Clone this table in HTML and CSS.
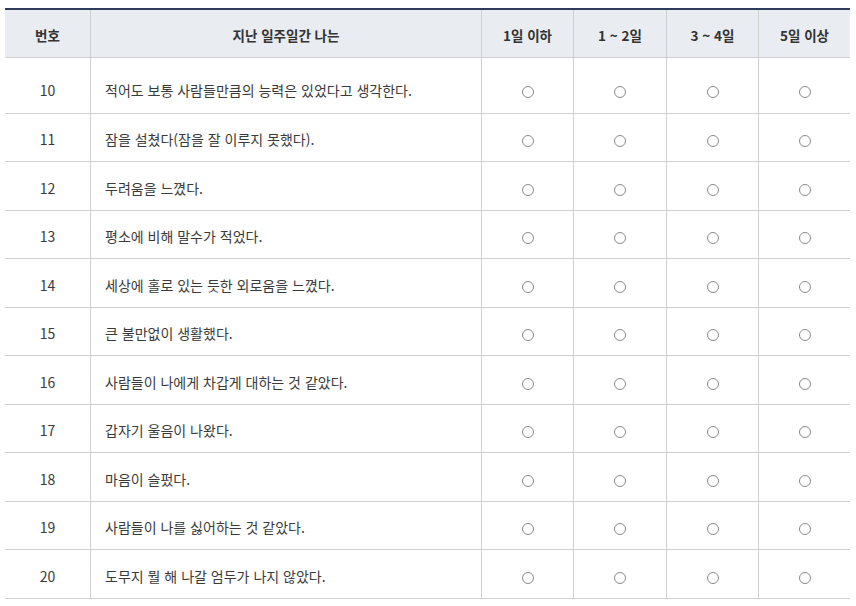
FILE: index.html
```html
<!DOCTYPE html>
<html lang="ko">
<head>
<meta charset="utf-8">
<link rel="stylesheet" href="styles.css">
</head>
<body>
<table class="survey">
  <colgroup>
    <col class="c-no"><col class="c-q"><col class="c-opt"><col class="c-opt2"><col class="c-opt"><col class="c-opt">
  </colgroup>
  <thead>
    <tr>
      <th class="first">번호</th>
      <th>지난 일주일간 나는</th>
      <th>1일 이하</th>
      <th>1 ~ 2일</th>
      <th>3 ~ 4일</th>
      <th>5일 이상</th>
    </tr>
  </thead>
  <tbody>
    <tr class="r-first"><td class="first">10</td><td class="q">적어도 보통 사람들만큼의 능력은 있었다고 생각한다.</td><td><span class="radio"></span></td><td><span class="radio"></span></td><td><span class="radio"></span></td><td><span class="radio"></span></td></tr>
    <tr class="r-a"><td class="first">11</td><td class="q">잠을 설쳤다(잠을 잘 이루지 못했다).</td><td><span class="radio"></span></td><td><span class="radio"></span></td><td><span class="radio"></span></td><td><span class="radio"></span></td></tr>
    <tr class="r-b"><td class="first">12</td><td class="q">두려움을 느꼈다.</td><td><span class="radio"></span></td><td><span class="radio"></span></td><td><span class="radio"></span></td><td><span class="radio"></span></td></tr>
    <tr class="r-a"><td class="first">13</td><td class="q">평소에 비해 말수가 적었다.</td><td><span class="radio"></span></td><td><span class="radio"></span></td><td><span class="radio"></span></td><td><span class="radio"></span></td></tr>
    <tr class="r-b"><td class="first">14</td><td class="q">세상에 홀로 있는 듯한 외로움을 느꼈다.</td><td><span class="radio"></span></td><td><span class="radio"></span></td><td><span class="radio"></span></td><td><span class="radio"></span></td></tr>
    <tr class="r-a"><td class="first">15</td><td class="q">큰 불만없이 생활했다.</td><td><span class="radio"></span></td><td><span class="radio"></span></td><td><span class="radio"></span></td><td><span class="radio"></span></td></tr>
    <tr class="r-b"><td class="first">16</td><td class="q">사람들이 나에게 차갑게 대하는 것 같았다.</td><td><span class="radio"></span></td><td><span class="radio"></span></td><td><span class="radio"></span></td><td><span class="radio"></span></td></tr>
    <tr class="r-a"><td class="first">17</td><td class="q">갑자기 울음이 나왔다.</td><td><span class="radio"></span></td><td><span class="radio"></span></td><td><span class="radio"></span></td><td><span class="radio"></span></td></tr>
    <tr class="r-b"><td class="first">18</td><td class="q">마음이 슬펐다.</td><td><span class="radio"></span></td><td><span class="radio"></span></td><td><span class="radio"></span></td><td><span class="radio"></span></td></tr>
    <tr class="r-a"><td class="first">19</td><td class="q">사람들이 나를 싫어하는 것 같았다.</td><td><span class="radio"></span></td><td><span class="radio"></span></td><td><span class="radio"></span></td><td><span class="radio"></span></td></tr>
    <tr class="r-b"><td class="first">20</td><td class="q">도무지 뭘 해 나갈 엄두가 나지 않았다.</td><td><span class="radio"></span></td><td><span class="radio"></span></td><td><span class="radio"></span></td><td><span class="radio"></span></td></tr>
  </tbody>
</table>
</body>
</html>
```
FILE: styles.css
```css
html, body {
  margin: 0;
  padding: 0;
  background: #ffffff;
}

body {
  font-family: "Noto Sans CJK KR", "Noto Sans", sans-serif;
  color: #3a3a3a;
}

.survey {
  margin: 8px 0 0 5px;
  width: 845px;
  table-layout: fixed;
  border-collapse: separate;
  border-spacing: 0;
  border-top: 2px solid #2c3c5a;
}

.c-no { width: 85px; }
.c-q { width: 391px; }
.c-opt { width: 92px; }
.c-opt2 { width: 93px; }

.survey th,
.survey td {
  box-sizing: border-box;
  padding: 0;
  text-align: center;
  vertical-align: middle;
  border-left: 1px solid #d0d0d0;
  border-bottom: 1px solid #cfcfcf;
}

.survey th.first,
.survey td.first {
  border-left: none;
}

.survey th {
  height: 48px;
  background: #e9ecf1;
  font-size: 13.5px;
  font-weight: 700;
  color: #333333;
  padding-top: 2px;
}

.survey td {
  font-size: 14px;
  color: #3a3a3a;
  padding-top: 3px;
}

.survey td.q {
  text-align: left;
  padding-left: 14px;
}

.r-first td { height: 56px; padding-top: 8px; }
.r-a td { height: 48px; }
.r-b td { height: 49px; }

.radio {
  display: inline-block;
  width: 12px;
  height: 12px;
  box-sizing: border-box;
  border: 1.5px solid #8a8a8a;
  border-radius: 50%;
  vertical-align: middle;
}
```
